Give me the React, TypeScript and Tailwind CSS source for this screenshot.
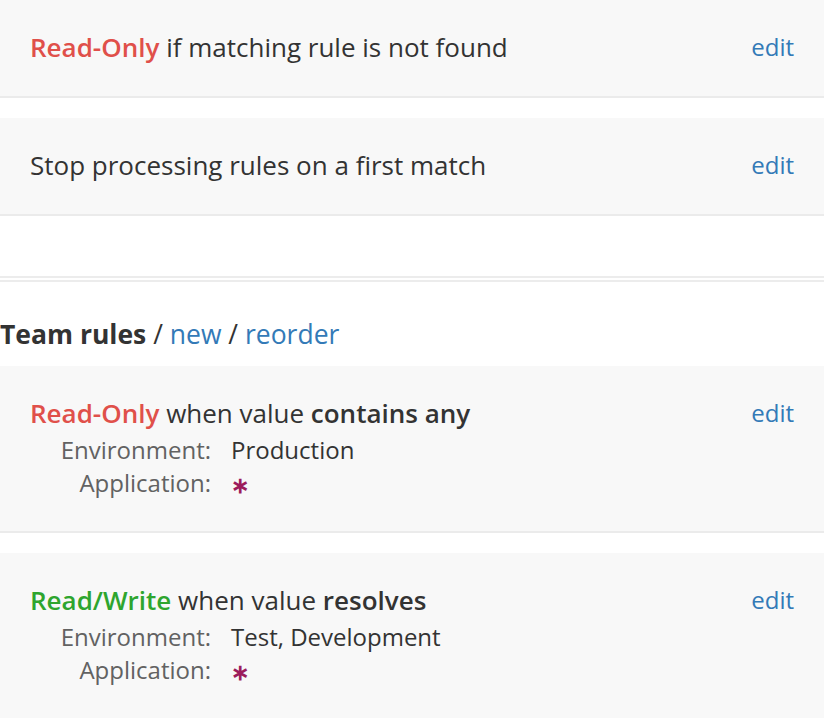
const font = { fontFamily: '"Open Sans", "Noto Sans", sans-serif' };

function Card({ children }: { children: React.ReactNode }) {
  return (
    <div className="flex justify-between items-start bg-[#f8f8f8] border-b-2 border-[#ebebeb] pl-[30px] pr-[30px] pt-[27px] mb-[20px]">
      <div className="min-w-0">{children}</div>
      <a href="#" className="text-[24px] leading-[40px] text-[#337ab7]">
        edit
      </a>
    </div>
  );
}

function Detail({ label, value, any }: { label: string; value?: string; any?: boolean }) {
  return (
    <div className="flex text-[24px] leading-[33px]">
      <div className="w-[181px] text-right text-[#626262]">{label}</div>
      <div className="pl-[20px] text-[#333]">
        {any ? <span className="text-[#9c1c5c] font-semibold text-[22px] relative top-[1px]">∗</span> : value}
      </div>
    </div>
  );
}

export default function App() {
  return (
    <div className="w-[824px] bg-white text-[#333]" style={font}>
      <Card>
        <div className="text-[26px] leading-[40px] pb-[29px]">
          <span className="font-semibold text-[#e0504a]">Read-Only</span> if matching rule is not found
        </div>
      </Card>
      <Card>
        <div className="text-[26px] leading-[40px] pb-[29px]">Stop processing rules on a first match</div>
      </Card>

      <div className="mt-[60px] h-[6px] border-y-2 border-[#ececec]" />

      <h2 className="mt-[34px] mb-[14px] text-[26.5px] leading-[36px]">
        <span className="font-bold">Team rules</span> /{' '}
        <a href="#" className="text-[#337ab7]">new</a> /{' '}
        <a href="#" className="text-[#337ab7]">reorder</a>
      </h2>

      <Card>
        <div className="pb-[31px]">
          <div className="text-[26px] leading-[40px]">
            <span className="font-semibold text-[#e0504a]">Read-Only</span> when value{' '}
            <span className="font-semibold">contains any</span>
          </div>
          <Detail label="Environment:" value="Production" />
          <Detail label="Application:" any />
        </div>
      </Card>
      <Card>
        <div className="pb-[31px]">
          <div className="text-[26px] leading-[40px]">
            <span className="font-semibold text-[#2ea52e]">Read/Write</span> when value{' '}
            <span className="font-semibold">resolves</span>
          </div>
          <Detail label="Environment:" value="Test, Development" />
          <Detail label="Application:" any />
        </div>
      </Card>
    </div>
  );
}
